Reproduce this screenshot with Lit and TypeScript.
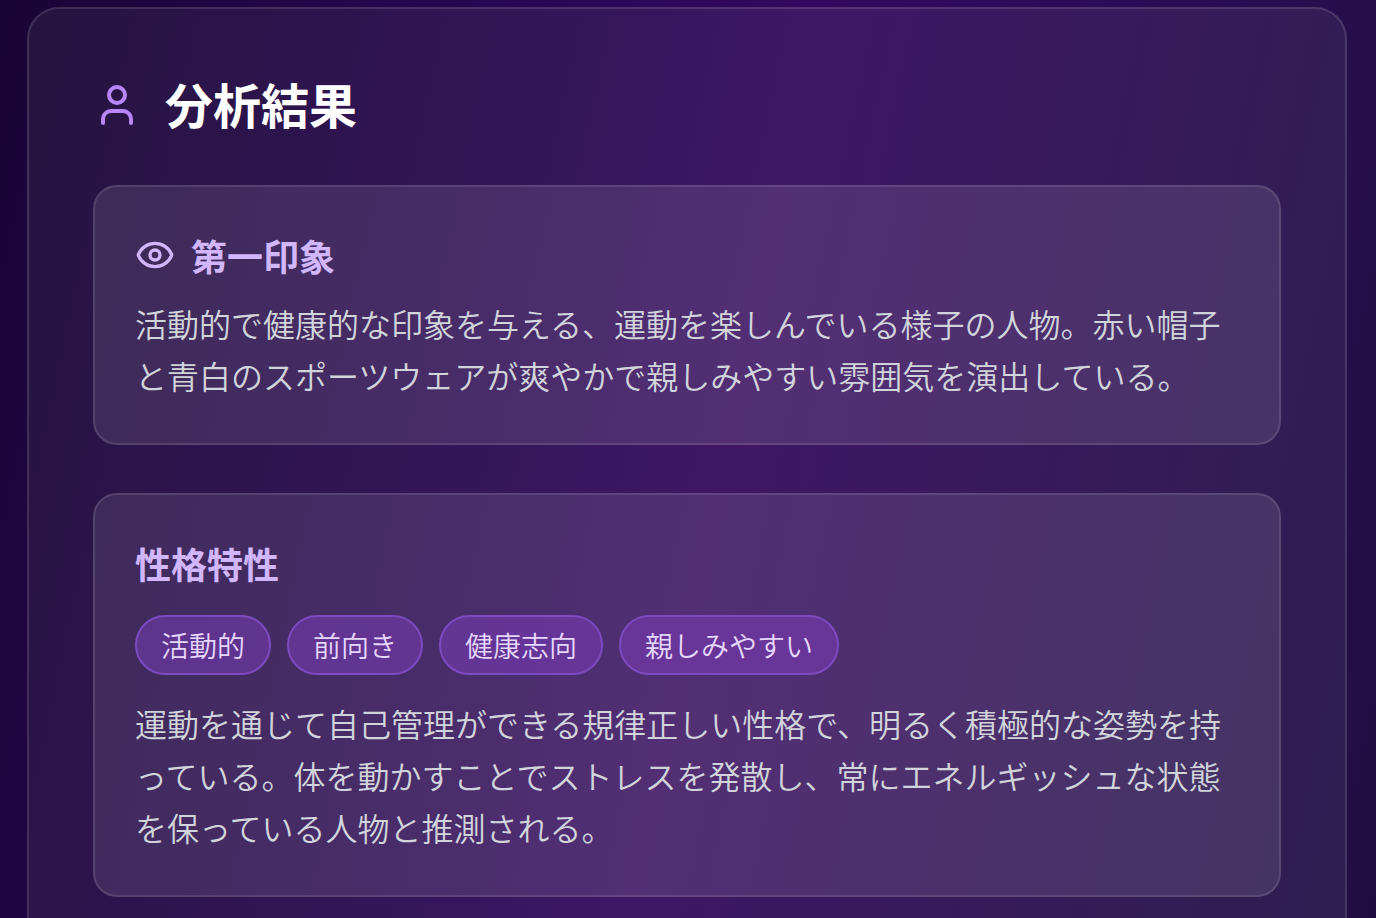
import { LitElement, html, css } from "lit";
import { customElement, property } from "lit/decorators.js";

@customElement("result-card")
class ResultCard extends LitElement {
  @property() heading = "";

  static styles = css`
    :host {
      display: block;
      box-sizing: border-box;
      padding: 40px;
      border: 2px solid rgba(255, 255, 255, 0.11);
      border-radius: 24px;
      background: rgba(255, 255, 255, 0.1);
    }
    .heading {
      display: flex;
      align-items: center;
      gap: 16px;
      margin: 0;
      font-size: 36px;
      line-height: 56px;
      font-weight: 700;
      color: #d2b6fb;
    }
  `;

  render() {
    return html`
      <h3 class="heading"><slot name="icon"></slot>${this.heading}</h3>
      <slot></slot>
    `;
  }
}

@customElement("app-root")
class AppRoot extends LitElement {
  private traits = ["活動的", "前向き", "健康志向", "親しみやすい"];

  static styles = css`
    :host {
      display: block;
      box-sizing: border-box;
      height: 100vh;
      padding: 7px 29px 29px 27px;
      overflow-y: auto;
      scrollbar-width: none;
      font-family: "Noto Sans CJK JP", "Liberation Sans", sans-serif;
      background: linear-gradient(102deg, #190534 0%, #1f0542 12%, #2a0755 35%, #34085e 52%, #2c0b57 70%, #260f4c 88%, #200d40 100%);
    }
    .panel {
      padding: 64px;
      border: 2px solid rgba(255, 255, 255, 0.12);
      border-radius: 32px;
      background: linear-gradient(102deg, #26143f 0%, #2d144e 20%, #38165e 42%, #401765 52%, #38195c 72%, #321d55 88%, #2c1d50 100%) border-box;
    }
    .title-row {
      display: flex;
      align-items: center;
      gap: 24px;
      margin-bottom: 48px;
    }
    .title {
      margin: 0;
      padding-bottom: 4px;
      font-size: 48px;
      line-height: 60px;
      font-weight: 700;
      color: #fff;
    }
    .icon {
      display: block;
      flex: none;
      fill: none;
      stroke: currentColor;
      stroke-width: 2;
      stroke-linecap: round;
      stroke-linejoin: round;
    }
    .icon-user {
      width: 48px;
      height: 48px;
      color: #b985fa;
    }
    .icon-eye {
      width: 40px;
      height: 40px;
    }
    .cards {
      display: grid;
      gap: 48px;
    }
    .text {
      margin: 14px 0 2px;
      font-size: 32px;
      line-height: 52px;
      font-weight: 350;
      line-break: loose;
      color: #d1d5db;
    }
    .traits {
      display: flex;
      flex-wrap: wrap;
      gap: 16px;
      margin: 24px 0 22px;
      padding: 0;
      list-style: none;
    }
    .trait {
      padding: 8px 24px;
      border: 2px solid #7d4abf;
      border-radius: 32px;
      background: rgba(130, 65, 200, 0.45);
      font-size: 28px;
      line-height: 40px;
      font-weight: 350;
      color: #e7d6fe;
    }
  `;

  render() {
    return html`
      <main class="panel">
        <header class="title-row">
          <svg class="icon icon-user" viewBox="0 0 24 24" aria-hidden="true">
            <path d="M19 21v-2a4 4 0 0 0-4-4H9a4 4 0 0 0-4 4v2" />
            <circle cx="12" cy="7" r="4" />
          </svg>
          <h2 class="title">分析結果</h2>
        </header>
        <div class="cards">
          <result-card heading="第一印象">
            <svg slot="icon" class="icon icon-eye" viewBox="0 0 24 24" aria-hidden="true">
              <path d="M2.062 12.348a1 1 0 0 1 0-.696 10.75 10.75 0 0 1 19.876 0 1 1 0 0 1 0 .696 10.75 10.75 0 0 1-19.876 0" />
              <circle cx="12" cy="12" r="3" />
            </svg>
            <p class="text">活動的で健康的な印象を与える、運動を楽しんでいる様子の人物。赤い帽子と青白のスポーツウェアが爽やかで親しみやすい雰囲気を演出している。</p>
          </result-card>
          <result-card heading="性格特性">
            <ul class="traits">
              ${this.traits.map((t) => html`<li class="trait">${t}</li>`)}
            </ul>
            <p class="text">運動を通じて自己管理ができる規律正しい性格で、明るく積極的な姿勢を持っている。体を動かすことでストレスを発散し、常にエネルギッシュな状態を保っている人物と推測される。</p>
          </result-card>
        </div>
      </main>
    `;
  }
}
